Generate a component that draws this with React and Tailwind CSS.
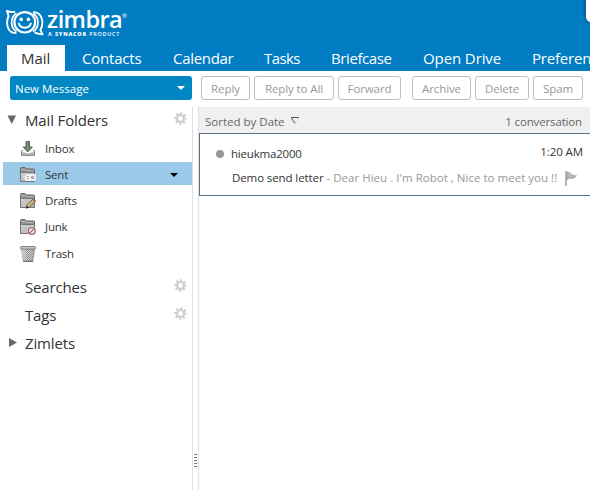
import React from "react";

function Gear() {
  return (
    <svg width="13" height="13" viewBox="0 0 13 13" className="mt-[5px] block" fill="none" stroke="#cbced2">
      <circle cx="6.5" cy="6.5" r="3.5" strokeWidth="2.2" />
      <circle cx="6.5" cy="6.5" r="5.3" strokeWidth="2" strokeDasharray="2.1 2.06" strokeDashoffset="1" />
    </svg>
  );
}

function Logo() {
  return (
    <div className="ml-[6px] mt-[10px] flex h-[27px] w-[124px]">
      <svg width="38" height="27" viewBox="0 0 38 27" className="block shrink-0" fill="none" stroke="#fff" strokeLinejoin="round">
        <path d="M10.5 22.8Q4.6 23.6 2.3 18.4Q-.3 12 2.6 6L.9 1Q4.5 2.4 9 1.7" strokeWidth="1.9" />
        <path d="M27 2.2Q33.2 1.8 35.5 7.8Q37.8 14 34.4 20L36.5 24.4Q32 24.2 28.5 22.4" strokeWidth="1.9" />
        <path d="M10.5 3.2Q5.6 6.5 5.6 12.4Q5.6 18.4 10.5 21.6" strokeWidth="1.7" />
        <path d="M27 3.2Q32 6.5 32 12.4Q32 18.4 27 21.6" strokeWidth="1.7" />
        <ellipse cx="18.8" cy="12.3" rx="10.4" ry="10.2" strokeWidth="2.2" />
        <circle cx="15.2" cy="9.4" r="1.8" fill="#fff" stroke="none" />
        <circle cx="22.4" cy="9.4" r="1.8" fill="#fff" stroke="none" />
        <path d="M12.8 13.6Q14 17.8 18.8 17.8Q23.6 17.8 24.8 13.6" strokeWidth="2" strokeLinecap="round" />
      </svg>
      <div className="ml-[3px] flex flex-col">
        <div className="flex h-[21px] items-start">
          <span className="mt-[-1px] text-[23.5px] font-semibold leading-[21px] tracking-[-0.6px]">zimbra</span>
          <span className="mt-[3px] text-[6px] leading-[7px]">®</span>
        </div>
        <div className="ml-px flex h-[6px] gap-[2.5px] whitespace-nowrap text-[5.4px] font-bold leading-[6px] tracking-[0.75px]">
          <span>A</span>
          <span className="font-extrabold">SYNACOR</span>
          <span className="font-semibold">PRODUCT</span>
        </div>
      </div>
    </div>
  );
}

function FolderShape() {
  return (
    <>
      <path d="M.5 14.5V1.5Q.5.5 1.5.5H5L6.5 2H13.5Q14.5 2 14.5 3V14.5Z" fill="#929292" stroke="#686868" />
      <path d="M1 2.5H5.5L6.5 3.5H14" stroke="#b5b5b5" fill="none" />
      <path d="M.5 14.5V6.5L1.5 5.5H13.5L14.5 6.5V13.5L13.5 14.5Z" fill="url(#folderFace)" stroke="#777" />
    </>
  );
}

function FolderIcon({ kind }) {
  return (
    <svg width="16" height="16" viewBox="0 0 16 16" className="block shrink-0 overflow-visible">
      <defs>
        <linearGradient id="folderFace" x2="1" y2="1">
          <stop stopColor="#d2d2d2" />
          <stop offset="1" stopColor="#b0b0b0" />
        </linearGradient>
        <pattern id="mesh" width="2" height="2" patternUnits="userSpaceOnUse">
          <rect width="2" height="2" fill="#d0d0d0" />
          <rect width="1" height="1" fill="#8a8a8a" />
          <rect x="1" y="1" width="1" height="1" fill="#8a8a8a" />
        </pattern>
        <linearGradient id="canShade">
          <stop stopColor="#fff" stopOpacity=".5" />
          <stop offset=".5" stopColor="#fff" stopOpacity="0" />
          <stop offset="1" stopColor="#777" stopOpacity=".45" />
        </linearGradient>
      </defs>
      {kind === "inbox" && (
        <>
          <path d="M3 9.5H1.5V14.5H14.5V9.5H13" fill="none" stroke="#999" />
          <path d="M1.5 12H4.5L6 13H10L11.5 12H14.5V14.5H1.5Z" fill="#bbb" stroke="#888" strokeWidth=".8" />
          <path d="M6 .5H9.5V6H12.4L7.75 11L3 6H6Z" fill="#718b73" stroke="#4b5d4c" strokeWidth=".9" />
        </>
      )}
      {kind === "sent" && (
        <>
          <FolderShape />
          <rect x="5.5" y="7.5" width="10" height="6" fill="#f6f6f6" stroke="#e3e6ea" />
          <path d="M3 9.5H8M4 11.5H8" stroke="#e8eaee" />
          <path d="M7 9.5H9M7 11.5H9" stroke="#a5adc0" />
          <rect x="11" y="9" width="3" height="3" fill="#b9a6b5" />
        </>
      )}
      {kind === "drafts" && (
        <>
          <FolderShape />
          <path d="M6 15.2L7.3 11.5L13 6.2L15.4 8.5L9.5 14Z" fill="#cbb582" stroke="#5b5141" strokeWidth=".8" />
          <path d="M12.5 6.5L13.7 5.5L16 7.7L14.8 8.9Z" fill="#a65a54" />
          <path d="M6 15.5L6.8 12.8L8.7 14.5Z" fill="#222" />
        </>
      )}
      {kind === "junk" && (
        <>
          <FolderShape />
          <circle cx="11.8" cy="12" r="4.4" fill="#fff" />
          <circle cx="11.8" cy="12" r="3.4" fill="#eee" stroke="#9c6468" strokeWidth="1.3" />
          <path d="M9.4 14.4L14.2 9.6" stroke="#9c6468" strokeWidth="1.2" />
        </>
      )}
      {kind === "trash" && (
        <>
          <path d="M1.5 2.5H14.5L12.8 15.5H3.4Z" fill="url(#mesh)" stroke="#8c8c8c" strokeWidth=".8" />
          <path d="M1.5 2.5H14.5L12.8 15.5H3.4Z" fill="url(#canShade)" />
          <rect x=".4" y=".5" width="15.2" height="2.6" rx="1" fill="#c8c8c8" stroke="#666" strokeWidth=".8" />
          <path d="M3.2 15.3H13" stroke="#666" />
        </>
      )}
    </svg>
  );
}

const tabs = [
  ["Mail", "ml-[7px] w-[58px] pl-[14px] bg-white text-[#333] tracking-[0px]"],
  ["Contacts", "w-[91px] pl-[17px] text-white tracking-[-0.2px]"],
  ["Calendar", "w-[91px] pl-[17px] text-white tracking-[-0.3px]"],
  ["Tasks", "w-[67px] pl-[17px] text-white tracking-[-0.6px]"],
  ["Briefcase", "w-[92px] pl-[17px] text-white tracking-[-0.4px]"],
  ["Open Drive", "w-[109px] pl-[17px] text-white tracking-[-0.1px]"],
  ["Preferences", "w-[110px] pl-[17px] text-white tracking-[-0.2px]"],
];

const folders = [
  ["inbox", "Inbox", "h-[26px]"],
  ["sent", "Sent", "h-[23px] pt-[2px] bg-[#9acae8]"],
  ["drafts", "Drafts", "mt-[2px] h-[27px]"],
  ["junk", "Junk", "h-[25px]"],
  ["trash", "Trash", "h-[29px]"],
];

const actions = [
  ["Reply", "w-[49px]"],
  ["Reply to All", "ml-[4px] w-[80px]"],
  ["Forward", "ml-[4px] w-[63px]"],
  ["Archive", "ml-[11px] w-[59px]"],
  ["Delete", "ml-[4px] w-[54px]"],
  ["Spam", "ml-[4px] w-[50px]"],
];

function Section({ name, marker, gear, className }) {
  return (
    <div className={`flex h-7 items-start ${className}`}>
      <div className="w-[18px] pt-[6px]">
        {marker === "down" && (
          <svg width="9" height="9" className="block"><path d="M.5 .5H9L4.75 9Z" fill="#666" /></svg>
        )}
        {marker === "right" && (
          <svg width="10" height="9" className="block"><path d="M2 0L10 4.5L2 9Z" fill="#666" /></svg>
        )}
      </div>
      <span className="-mt-px flex-1 text-[15px] leading-6 tracking-[-0.15px] text-[#333]">{name}</span>
      {gear && <div className="mr-[5px] -mt-[2px]"><Gear /></div>}
    </div>
  );
}

export default function App() {
  return (
    <div className="flex h-[490px] w-[590px] flex-col overflow-hidden bg-white font-['Open_Sans','Noto_Sans',sans-serif] text-[11.5px] text-[#333]">
      <header className="relative flex h-[71px] flex-col overflow-hidden bg-[#007cc3] text-white">
        <Logo />
        <nav className="mt-[8px] flex h-[26px]">
          {tabs.map(([name, cls]) => (
            <div key={name} className={`shrink-0 whitespace-nowrap text-[15px] leading-[27px] ${cls}`}>{name}</div>
          ))}
        </nav>
        <div className="absolute -top-2 left-[586px] h-[30px] w-10 rounded-[5px] bg-white shadow-[0_0_4px_#003e68]" />
      </header>

      <div className="flex h-9 items-start pl-[10px] pt-[5px]">
        <button className="mr-[9px] flex h-6 w-[182px] items-center justify-between rounded-[3px] bg-[#0087c3] pl-[5px] pr-[7px] text-white">
          <span className="pt-px">New Message</span>
          <svg width="8" height="4"><path d="M0 0H8L4 4Z" fill="#fff" /></svg>
        </button>
        {actions.map(([name, cls]) => (
          <button key={name} className={`h-6 shrink-0 whitespace-nowrap rounded-[3px] border border-[#bfbfbf] pt-px text-center tracking-[-0.1px] text-[#999] ${cls}`}>{name}</button>
        ))}
      </div>

      <div className="flex min-h-0 flex-1">
        <aside className="w-[193px] border-r border-[#dfdfdf] pl-[3px]">
          <Section name="Mail Folders" marker="down" gear className="h-[29px] pl-[4px] pt-[2px]" />
          {folders.map(([kind, name, cls]) => (
            <div key={kind} className={`flex items-center pl-[17px] ${cls}`}>
              <FolderIcon kind={kind} />
              <span className="ml-[9px] flex-1 tracking-[-0.2px]">{name}</span>
              {kind === "sent" && (
                <svg width="8" height="4" className="mr-[14px]"><path d="M0 0H8L4 4Z" fill="#000" /></svg>
              )}
            </div>
          ))}
          <Section name="Searches" gear className="mt-[8px] pl-[4px]" />
          <Section name="Tags" gear className="pl-[4px]" />
          <Section name="Zimlets" marker="right" className="pl-[4px]" />
        </aside>

        <div className="flex w-[5px] flex-col items-center gap-[2px] pt-[347px]">
          {[0, 1, 2, 3, 4].map((i) => (
            <i key={i} className="h-px w-[3px] bg-[#777]" />
          ))}
        </div>

        <main className="flex-1 border-l border-[#dfdfdf]">
          <div className="flex h-[26px] items-center bg-[#f0f0f0] pl-[6px] pr-2 text-[#666]">
            <span className="pt-[3px]">Sorted by Date</span>
            <svg width="8" height="7" viewBox="0 0 8 7" className="ml-[6px]">
              <path d="M0 .5H8M.5 1L4 6.5" stroke="#555" fill="none" />
              <path d="M7.5 1L4 6.5" stroke="#ddd" />
            </svg>
            <span className="ml-auto pt-[3px] tracking-[-0.15px]">1 conversation</span>
          </div>
          <article className="h-[63px] border border-r-0 border-[#587388]">
            <div className="flex h-[30px] items-center pl-[16px] pr-[7px]">
              <i className="mt-[9px] h-2 w-2 rounded-full bg-[#999]" />
              <span className="ml-[7px] mt-[9px] tracking-[-0.2px]">hieukma2000</span>
              <span className="ml-auto mt-[6px] tracking-[-0.1px]">1:20 AM</span>
            </div>
            <div className="flex h-[28px] items-center pl-[32px]">
              <div className="w-[325px] overflow-hidden whitespace-nowrap">
                <span className="tracking-[-0.1px]">Demo send letter</span>
                <span className="tracking-[0.02px] text-[#999]"> - Dear Hieu . I'm Robot , Nice to meet you !!</span>
              </div>
              <svg width="12" height="15" viewBox="0 0 12 15" className="ml-[8px] shrink-0">
                <path d="M1 0V15" stroke="#999" strokeWidth="1.4" />
                <path d="M2 1Q5 1 6 3Q8 5 11.5 4.8Q9 8 6.5 7.3Q4 6.5 2 9Z" fill="#b8b8b8" stroke="#999" strokeWidth=".7" />
              </svg>
            </div>
          </article>
        </main>
      </div>
    </div>
  );
}
